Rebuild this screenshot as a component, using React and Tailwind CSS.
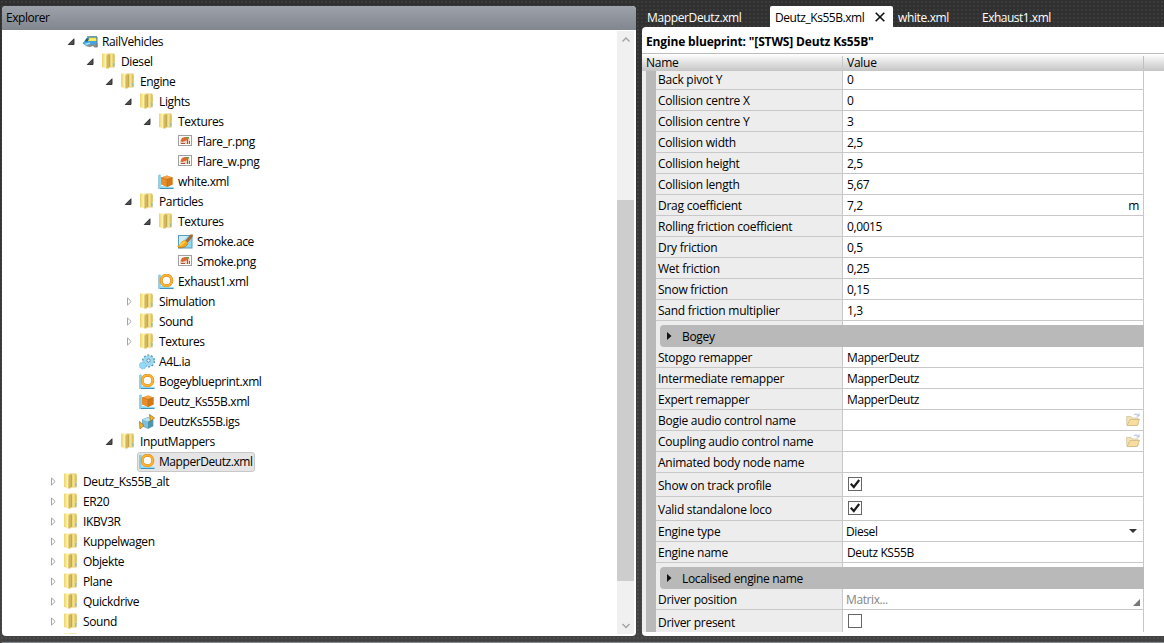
import React from 'react';

const tree = [
    { name: 'RailVehicles', icon: 'train', depth: 1, state: 'open' },
    { name: 'Diesel', icon: 'folder', depth: 2, state: 'open' },
    { name: 'Engine', icon: 'folder', depth: 3, state: 'open' },
    { name: 'Lights', icon: 'folder', depth: 4, state: 'open' },
    { name: 'Textures', icon: 'folder', depth: 5, state: 'open' },
    { name: 'Flare_r.png', icon: 'png', depth: 6 },
    { name: 'Flare_w.png', icon: 'png', depth: 6 },
    { name: 'white.xml', icon: 'box', depth: 5 },
    { name: 'Particles', icon: 'folder', depth: 4, state: 'open' },
    { name: 'Textures', icon: 'folder', depth: 5, state: 'open' },
    { name: 'Smoke.ace', icon: 'brush', depth: 6 },
    { name: 'Smoke.png', icon: 'png', depth: 6 },
    { name: 'Exhaust1.xml', icon: 'ring', depth: 5 },
    { name: 'Simulation', icon: 'folder', depth: 4, state: 'closed' },
    { name: 'Sound', icon: 'folder', depth: 4, state: 'closed' },
    { name: 'Textures', icon: 'folder', depth: 4, state: 'closed' },
    { name: 'A4L.ia', icon: 'gear', depth: 4 },
    { name: 'Bogeyblueprint.xml', icon: 'ring', depth: 4 },
    { name: 'Deutz_Ks55B.xml', icon: 'box', depth: 4 },
    { name: 'DeutzKs55B.igs', icon: 'shape', depth: 4 },
    { name: 'InputMappers', icon: 'folder', depth: 3, state: 'open' },
    { name: 'MapperDeutz.xml', icon: 'ring', depth: 4, selected: true },
    { name: 'Deutz_Ks55B_alt', icon: 'folder', depth: 0, state: 'closed' },
    { name: 'ER20', icon: 'folder', depth: 0, state: 'closed' },
    { name: 'IKBV3R', icon: 'folder', depth: 0, state: 'closed' },
    { name: 'Kuppelwagen', icon: 'folder', depth: 0, state: 'closed' },
    { name: 'Objekte', icon: 'folder', depth: 0, state: 'closed' },
    { name: 'Plane', icon: 'folder', depth: 0, state: 'closed' },
    { name: 'Quickdrive', icon: 'folder', depth: 0, state: 'closed' },
    { name: 'Sound', icon: 'folder', depth: 0, state: 'closed' },
    { name: '', icon: 'folder', depth: 0 },
];

const rows = [
    { name: 'Back pivot Y', value: '0' },
    { name: 'Collision centre X', value: '0' },
    { name: 'Collision centre Y', value: '3' },
    { name: 'Collision width', value: '2,5' },
    { name: 'Collision height', value: '2,5' },
    { name: 'Collision length', value: '5,67' },
    { name: 'Drag coefficient', value: '7,2', unit: 'm' },
    { name: 'Rolling friction coefficient', value: '0,0015' },
    { name: 'Dry friction', value: '0,5' },
    { name: 'Wet friction', value: '0,25' },
    { name: 'Snow friction', value: '0,15' },
    { name: 'Sand friction multiplier', value: '1,3' },
    { name: 'Bogey', type: 'group' },
    { name: 'Stopgo remapper', value: 'MapperDeutz' },
    { name: 'Intermediate remapper', value: 'MapperDeutz' },
    { name: 'Expert remapper', value: 'MapperDeutz' },
    { name: 'Bogie audio control name', type: 'file' },
    { name: 'Coupling audio control name', type: 'file' },
    { name: 'Animated body node name', value: '' },
    { name: 'Show on track profile', type: 'check', checked: true },
    { name: 'Valid standalone loco', type: 'check', checked: true },
    { name: 'Engine type', value: 'Diesel', type: 'select' },
    { name: 'Engine name', value: 'Deutz KS55B' },
    { name: 'Localised engine name', type: 'group' },
    { name: 'Driver position', value: 'Matrix...', type: 'matrix' },
    { name: 'Driver present', type: 'check', checked: false },
];

// left padding of each tree level
const indents = ['pl-[45px]', 'pl-[64px]', 'pl-[83px]', 'pl-[102px]', 'pl-[121px]', 'pl-[140px]', 'pl-[159px]'];

function Axes() {
    return (
        <>
            <path d="M1 0L3 1V12L16 13L15 15H1Z" fill="#8fdcf5" />
            <path d="M0.8 1V15" stroke="#7fb4cf" />
            <path d="M2 14.5H15.5" stroke="#3f93bb" />
        </>
    );
}

function FileIcon({ type }) {
    return (
        <svg width="16" height="16" viewBox="0 0 16 16" className={`shrink-0 ${type === 'folder' ? 'mb-[2px]' : 'mb-px'}`}>
            {type === 'folder' && (
                <>
                    <path d="M7 0.5H13.5V14.5H7Z" fill="#e3c964" />
                    <path d="M9.5 1H11.5V14H9.5Z" fill="#f2e294" />
                    <path d="M1 0.5H7L8 15.5H5.5L1 14Z" fill="url(#folderFront)" />
                    <path d="M5.5 2.5L8.5 1V14L5.5 15.8Z" fill="#d2b75e" />
                    <path d="M8.5 2V14" stroke="#bea14c" strokeWidth="0.8" />
                    <path d="M13 10V13.5" stroke="#62b8ce" />
                    <path d="M13.2 2V9.5" stroke="#d0b550" strokeWidth="0.8" />
                </>
            )}
            {type === 'train' && (
                <>
                    <path d="M9 9H15.5V13.5H12.5L11 12L8 13L3 12Z" fill="#8b8b8b" />
                    <path d="M0.5 9.5L5 3.5L8 2.5H15V10.5H8L4 11.5Z" fill="#43a5dd" />
                    <path d="M7 3.5H14.5V7H6Z" fill="#f5e33a" />
                    <path d="M4.5 4.5H7L5.5 7.5H2.8Z" fill="#2d5a70" />
                    <path d="M8 5H14V6.5H8Z" fill="#f3ef7c" />
                    <path d="M3 9.5L8 8.5V10L4 11Z" fill="#9be5ff" />
                    <path d="M5 2.8H15" stroke="#597d8c" />
                    <path d="M15 3V13" stroke="#777" />
                </>
            )}
            {type === 'png' && (
                <>
                    <rect x="1.5" y="1.5" width="13" height="10" fill="#fff" stroke="#a0a0a0" />
                    <path d="M3 10V8L5 4L8 3H12L13 6V10Z" fill="#e9d3c0" />
                    <path d="M3.5 7L5 4L8 3L11.5 3.5L11 6L8 7L5 8Z" fill="#dd6631" />
                    <path d="M8 3H12V4.5H9Z" fill="#6f9b43" />
                    <path d="M4 9.5H8" stroke="#a0563e" />
                    <path d="M10.5 6V10M12.5 7V10" stroke="#84675a" />
                </>
            )}
            {type === 'box' && (
                <>
                    <Axes />
                    <path d="M3 3.5L9 1.5L14.5 3.5V10.5L9 13L3 10.5Z" fill="#e98d25" />
                    <path d="M3 3.5L9 1.5L14.5 3.5L9 5.5Z" fill="#f2a344" />
                    <path d="M9 5.5L14.5 3.5V10.5L9 13Z" fill="#d27a1a" />
                    <path d="M3 3.5L9 5.5L14.5 3.5M9 5.5V12.5" fill="none" stroke="#b06318" strokeWidth="0.5" />
                </>
            )}
            {type === 'ring' && (
                <>
                    <Axes />
                    <circle cx="8.5" cy="6.5" r="5.3" fill="#fff" stroke="#d98a25" strokeWidth="3" />
                    <circle cx="8.5" cy="6.5" r="5.3" fill="none" stroke="#ffb52b" strokeWidth="1.8" />
                </>
            )}
            {type === 'brush' && (
                <>
                    <rect x="1.5" y="1.5" width="13.5" height="12.5" fill="#8fd6f2" stroke="#5b9dbd" />
                    <path d="M2 2H11L2 11Z" fill="#caeffb" />
                    <path d="M8 7L13.5 0.5L16 0.5L15.5 3L10.5 9Z" fill="#a56a35" />
                    <path d="M0 12.5C3 12 3 7 8 6L11 9C9 13 4 15.5 0 12.5Z" fill="#f5a719" />
                    <path d="M3 11C5 11 6 8 8 8" fill="none" stroke="#ffdb54" strokeWidth="1.5" />
                    <path d="M1 13.5C6 14.5 9 13 11 9.5" fill="none" stroke="#a8711b" strokeWidth="0.8" />
                </>
            )}
            {type === 'gear' && (
                <>
                    <circle cx="9.5" cy="7" r="5.6" fill="#9bd7ee" stroke="#5c9fc2" strokeWidth="2" strokeDasharray="2 1.5" />
                    <circle cx="9.5" cy="7" r="5.2" fill="#9fd8ef" />
                    <circle cx="9.5" cy="6.5" r="1.6" fill="#e8faff" stroke="#5796b6" />
                    <circle cx="3.8" cy="11.5" r="3.4" fill="#92daf6" stroke="#7abfdd" strokeDasharray="1.5 1" />
                </>
            )}
            {type === 'shape' && (
                <>
                    <path d="M3.5 5.5L9 3.5L14 5.5V12L9 14.5L3.5 12Z" fill="#7cc0da" stroke="#5e93aa" strokeWidth="0.7" />
                    <path d="M3.5 5.5L9 3.5L14 5.5L9 7.5Z" fill="#b7e3f0" />
                    <path d="M9 7.5L14 5.5V12L9 14.5Z" fill="#4f95b3" />
                    <path d="M10.5 0.5L15.5 4L11.5 7.5Z" fill="#f8b527" stroke="#85671e" strokeWidth="0.7" />
                    <path d="M0.5 7.5L5 11.5L1 15Z" fill="#f8b527" stroke="#85671e" strokeWidth="0.7" />
                </>
            )}
        </svg>
    );
}

function Arrow({ state }) {
    return (
        <svg width="9" height="9" viewBox="0 0 9 9" className="mr-[5px] mb-px shrink-0">
            {state === 'open' && <path d="M8 1.8V7.5H2.3Z" fill="#505050" stroke="#2a2a2a" strokeWidth="0.9" />}
            {state === 'closed' && <path d="M4.5 0.9V8.1L8.2 4.5Z" fill="#fff" stroke="#a6a6a6" />}
        </svg>
    );
}

function TreeItem({ item }) {
    return (
        <div className={`flex h-5 shrink-0 items-center ${indents[item.depth]}`}>
            <Arrow state={item.state} />
            <div className={`flex h-5 items-center rounded-[3px] border pr-px pl-px ${item.selected ? 'border-[#c8c8c8] bg-[#e5e5e5]' : 'border-transparent'}`}>
                <FileIcon type={item.icon} />
                <span className={`ml-1 leading-4 ${item.selected ? 'tracking-[-0.43px]' : 'tracking-[-0.37px]'}`}>{item.name}</span>
            </div>
        </div>
    );
}

function Explorer() {
    return (
        <div className="mt-[6px] flex h-[630px] w-[634px] shrink-0 flex-col overflow-hidden rounded-[4px] bg-white">
            <div className="h-6 shrink-0 bg-linear-to-b from-[#9da2aa] to-[#82878f] pl-1 leading-[23px] tracking-[-0.45px]">Explorer</div>
            <div className="flex min-h-0 flex-1 pr-[2px] pb-[2px]">
                <div className="mt-[2px] flex h-[602px] flex-1 flex-col overflow-hidden">
                    {tree.map((item, i) => <TreeItem key={i} item={item} />)}
                </div>
                <div className="mt-px flex w-[17px] flex-col bg-[#f0f0f0]">
                    <svg width="17" height="17" className="shrink-0">
                        <path d="M5.5 10.5L9 7L12.5 10.5" fill="none" stroke="#a3a3a3" strokeWidth="1.4" />
                    </svg>
                    <div className="mt-[152px] h-[381px] bg-[#cdcdcd]"></div>
                    <svg width="17" height="17" className="mt-auto shrink-0">
                        <path d="M5.5 7L9 10.5L12.5 7" fill="none" stroke="#a3a3a3" strokeWidth="1.4" />
                    </svg>
                </div>
            </div>
        </div>
    );
}

function CheckBox({ checked }) {
    return (
        <svg width="14" height="14" className="mb-px ml-[2px]">
            <rect x="0.5" y="0.5" width="13" height="13" fill="#fff" stroke="#666" />
            {checked && <path d="M2.8 6.8L5.8 10L11.2 3" fill="none" stroke="#1c1c1c" strokeWidth="2.2" />}
        </svg>
    );
}

function OpenFolder() {
    return (
        <svg width="14" height="14" viewBox="0 0 14 14" className="mr-[3px] ml-auto">
            <path d="M0.5 3.5H5L6 5H12V12H1Z" fill="#f0e3bb" stroke="#dccfa5" />
            <path d="M1 12.5L4 6.5H13.5L11 12.5Z" fill="#f9dda0" stroke="#d6c08c" />
            <path d="M8 2C9 0.5 11 0.5 12.5 2.5M13 0.5V3H10.5" fill="none" stroke="#a8b9d0" />
        </svg>
    );
}

function Group({ name }) {
    return (
        <div className="flex h-[26px] shrink-0 flex-col">
            <div className="flex h-1 shrink-0">
                <div className="w-[186px] bg-[#ededed]"></div>
                <div className="w-px bg-[#c8c8c8]"></div>
                <div className="flex-1 border-r border-[#c8c8c8]"></div>
            </div>
            <div className="flex flex-1 bg-[#ededed] pl-1">
                <div className="flex flex-1 items-center rounded-l-[4px] bg-[#b9b9b9] pl-[7px]">
                    <svg width="5" height="8"><path d="M0 0L4.5 4L0 8Z" fill="#111" /></svg>
                    <span className="mt-[2px] ml-[10px] tracking-[-0.32px]">{name}</span>
                </div>
            </div>
        </div>
    );
}

function Row({ row }) {
    if (row.type === 'group') return <Group name={row.name} />;
    const tall = row.type === 'check';
    return (
        <div className={`flex shrink-0 ${tall ? 'h-6' : 'h-[21px]'}`}>
            <div className={`w-[186px] border-b border-[#c8c8c8] bg-[#ededed] pl-[2px] ${tall ? 'leading-[25px]' : 'leading-[21px]'}`}>{row.name}</div>
            <div className="w-px bg-[#c8c8c8]"></div>
            <div className="flex flex-1 items-center border-r border-b border-[#c8c8c8] pl-[3px]">
                {row.type === 'check' && <CheckBox checked={row.checked} />}
                {row.value && (
                    <span className={`mt-px tracking-[-0.4px] ${row.type === 'matrix' ? 'text-[#858585]' : row.type === 'select' ? '' : 'pl-px'}`}>{row.value}</span>
                )}
                {row.unit && <span className="mt-px mr-1 ml-auto">{row.unit}</span>}
                {row.type === 'file' && <OpenFolder />}
                {row.type === 'select' && (
                    <svg width="8" height="4" className="mr-[6px] ml-auto"><path d="M0 0H8L4 4Z" fill="#333" /></svg>
                )}
                {row.type === 'matrix' && (
                    <svg width="7" height="7" className="mt-[7px] mr-[3px] ml-auto"><path d="M7 0V7H0Z" fill="#777" /></svg>
                )}
            </div>
        </div>
    );
}

function Editor() {
    return (
        <div className="ml-[6px] flex h-[636px] min-w-0 flex-1 flex-col">
            <div className="flex h-[27px] shrink-0 pt-[6px] leading-[23px] tracking-[-0.37px] text-white">
                <div className="w-[128px] pl-[5px]">MapperDeutz.xml</div>
                <div className="flex w-[123px] items-center rounded-t-[2px] bg-white pl-[5px] text-black">
                    <span className="mt-[2px] flex-1 tracking-[-0.45px]">Deutz_Ks55B.xml</span>
                    <svg width="10" height="10" className="mr-2"><path d="M0.7 0.7L9.3 9.3M9.3 0.7L0.7 9.3" stroke="#111" strokeWidth="1.6" /></svg>
                </div>
                <div className="w-[84px] pl-[5px]">white.xml</div>
                <div className="pl-[5px] tracking-[-0.5px]">Exhaust1.xml</div>
            </div>
            <div className="flex min-h-0 flex-1 flex-col overflow-hidden rounded-l-[4px] bg-white pb-1">
                <div className="h-[27px] shrink-0 border-b border-[#bdbdbd] pl-1 font-bold leading-[29px]">
                    <span className="tracking-[-0.16px]">Engine blueprint: "[STWS] Deutz Ks55B"</span>
                </div>
                <div className="flex h-[17px] shrink-0 bg-linear-to-b from-white to-[#c5c5c5] pt-[2px] leading-[14px]">
                    <div className="w-[200px] pl-1">Name</div>
                    <div className="h-[13px] w-px bg-[#c8c8c8]"></div>
                    <div className="w-[300px] pl-1">Value</div>
                    <div className="h-[13px] w-px bg-[#c0c0c0]"></div>
                </div>
                <div className="flex min-h-0 flex-1 overflow-hidden">
                    <div className="w-1 bg-[#eeeeee]"></div>
                    <div className="w-[10px] bg-[#b9b9b9]"></div>
                    <div className="-mt-[2px] flex w-[488px] flex-col">
                        {rows.map((row, i) => <Row key={i} row={row} />)}
                    </div>
                </div>
            </div>
        </div>
    );
}

function App() {
    return (
        <div className="h-[643px] w-[1164px] overflow-hidden bg-linear-to-b from-[#303030] to-[#424242] font-['Open_Sans','Noto_Sans',sans-serif] text-[12px] tracking-[-0.25px] whitespace-nowrap text-black">
            <svg width="0" height="0" className="absolute">
                <defs>
                    <linearGradient id="folderFront">
                        <stop offset="0" stopColor="#ecd36c" />
                        <stop offset="0.5" stopColor="#fdf1ab" />
                        <stop offset="1" stopColor="#e6cc6c" />
                    </linearGradient>
                </defs>
            </svg>
            <div className="flex h-[642px] bg-[radial-gradient(#ffffff10_0.7px,transparent_0.8px)] bg-[size:4px_4px] pl-[2px]">
                <Explorer />
                <Editor />
            </div>
            <div className="ml-[2px] h-px bg-[#858b93]"></div>
        </div>
    );
}

export default App;
